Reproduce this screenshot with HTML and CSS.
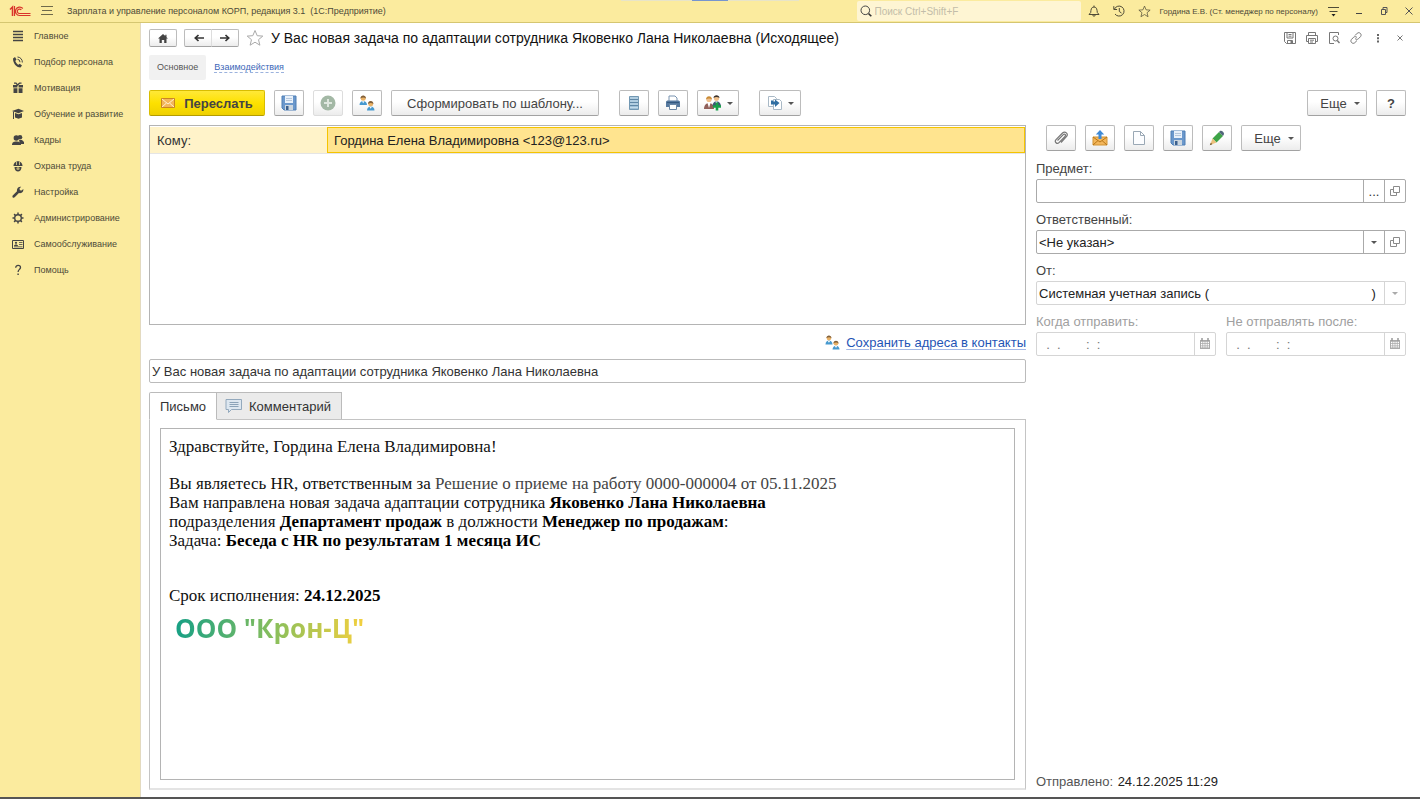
FILE: index.html
```html
<!DOCTYPE html>
<html lang="ru">
<head>
<meta charset="utf-8">
<title>Зарплата и управление персоналом КОРП, редакция 3.1</title>
<link rel="stylesheet" href="styles.css">
</head>
<body>
<svg class="defs" aria-hidden="true">
  <symbol id="floppy" viewBox="0 0 16 16"><path d="M1 1h14v14H3l-2-2z" fill="#6b98cc" stroke="#4f7fb5"/><path d="M4 1h8v7H4z" fill="#e9f1fa"/><path d="M5 3.500h6M5 5.500h6" stroke="#b5c7dc"/><path d="M4 10h8v5H4z" fill="#ccd6df"/><path d="M5 11h2.500v4H5z" fill="#3b608e"/></symbol>
  <symbol id="people" viewBox="0 0 16 16"><path d="M.5 10c0-5.500 7.500-5.500 7.500 0z" fill="#4699cf"/><path d="m3 6.300 1.200 2 1.200-2" fill="#fff"/><circle cx="4.200" cy="3.300" r="2.500" fill="#eab266"/><path d="M1.500 3.500C1.300-.5 7.100-.5 6.900 3.500 5.500 2 3 2 1.500 3.500" fill="#80603c"/><path d="M8 15.500c0-5.500 7.500-5.500 7.500 0z" fill="#4699cf"/><path d="m10.500 11.800 1.200 2 1.200-2" fill="#fff"/><circle cx="11.700" cy="8.800" r="2.500" fill="#eab266"/><path d="M9 9c-.2-4 5.600-4 5.400 0-1.400-1.500-3.900-1.500-5.400 0" fill="#80603c"/></symbol>
  <symbol id="open" viewBox="0 0 12 12"><path d="M4.500 1.500h6v6h-6zM4 4.500H1.500v6h6V8" fill="none" stroke="#8a8a8a"/></symbol>
  <symbol id="calendar" viewBox="0 0 12 12"><path d="M1 2h10v9H1z" fill="#aaa"/><path d="M3 0v3M9 0v3" stroke="#999" stroke-width="1.500"/><path d="M2 4.500h8M2 6.700h8M2 8.900h8" stroke="#fff" stroke-width="1.400" stroke-dasharray="1.400 .8"/></symbol>
  <symbol id="star" viewBox="0 0 18 18"><path d="m9 1.500 2.200 5.200 5.600.4-4.300 3.600 1.400 5.500L9 13.200l-4.900 3 1.400-5.500-4.300-3.600 5.600-.4z" fill="none" stroke="currentColor"/></symbol>
</svg>

<header class="topbar">
  <svg class="logo" viewBox="0 0 22 12"><path d="M1 4.500 3.500 2v9" fill="none" stroke="#d9352b" stroke-width="1.500"/><path d="M5.500 1v10M13.800 3.500A4.200 4.200 0 1 0 10.500 10.500H21.500M12.300 5A2.200 2.200 0 1 0 10.500 8.500H21.500" fill="none" stroke="#d9352b" stroke-width="1.200"/></svg>
  <button class="bare" aria-label="Меню"><svg width="12" height="10" viewBox="0 0 12 10"><path d="M0 .5h12M1 4.500h10M0 8.500h12" stroke="#6f6a4b"/></svg></button>
  <span class="app-title">Зарплата и управление персоналом КОРП, редакция 3.1&nbsp; (1С:Предприятие)</span>
  <label class="search">
    <svg width="12" height="12" viewBox="0 0 12 12"><circle cx="5.300" cy="5.300" r="4.300" fill="none" stroke="#444"/><path d="m8.500 8.500 2.800 2.800" stroke="#333" stroke-width="1.600"/></svg>
    <input type="text" placeholder="Поиск Ctrl+Shift+F" aria-label="Поиск">
  </label>
  <div class="top-tools">
    <button class="bare" aria-label="Уведомления"><svg width="12" height="12" viewBox="0 0 12 12"><path d="M1 9.500h10L9.300 7.500C9 5 9 2 6 2S3 5 2.700 7.500zM6 .5V2M4.700 9.800c.3 2 2.300 2 2.600 0" fill="none" stroke="#4f4b36"/></svg></button>
    <button class="bare" aria-label="История"><svg width="12" height="12" viewBox="0 0 12 12"><path d="M1.500 4A5 5 0 1 1 2 9M.8 1.200v3.300h3.300M6.300 3v3.500l2.200 1.500" fill="none" stroke="#4f4b36"/></svg></button>
    <button class="bare" aria-label="Избранное"><svg class="fav" width="13" height="13"><use href="#star"/></svg></button>
    <span class="user">Гордина Е.В. (Ст. менеджер по персоналу)</span>
    <button class="bare" aria-label="Настройки"><svg width="11" height="11" viewBox="0 0 11 11"><path d="M0 1.500h11M1.500 5.500h8" stroke="#4f4b36"/><path d="M3.500 8h4L5.500 10.500z" fill="#222"/></svg></button>
  </div>
  <div class="window-tools">
    <button class="bare" aria-label="Свернуть"><svg width="8" height="8" viewBox="0 0 8 8"><path d="M1 6.500h6" stroke="#444"/></svg></button>
    <button class="bare" aria-label="Развернуть"><svg width="8" height="8" viewBox="0 0 8 8"><path d="M1.500 2.500h4v5h-4zM3 2.500v-2h4v5H5.500" fill="none" stroke="#555"/></svg></button>
    <button class="bare" aria-label="Закрыть"><svg width="8" height="8" viewBox="0 0 8 8"><path d="m.5.5 7 7m0-7-7 7" stroke="#555"/></svg></button>
  </div>
</header>

<div class="body">
  <nav class="sidebar">
    <a href="#"><svg viewBox="0 0 12 12"><path d="M1 1.500h10M1 4.500h10M1 7.500h10M1 10.500h10" stroke="#444" stroke-width="1.300"/></svg>Главное</a>
    <a href="#"><svg viewBox="0 0 12 12"><path d="M1 2.500 3 1l1.500 2.500L3.300 5C4 7 5 8 6.500 8.800l1.200-1L10 9.500 8.500 11.500C4 11.500 1 7 1 2.500z" fill="#444"/><path d="M5.500 1a5 5 0 0 1 4.800 5.500M5.500 3.300A2.800 2.800 0 0 1 8 6.200" fill="none" stroke="#444"/></svg>Подбор персонала</a>
    <a href="#"><svg viewBox="0 0 12 12"><path d="M1 3h4.400v2.500H1zM6.600 3H11v2.500H6.600zM1.500 6.300h3.900V11H1.500zM6.600 6.300h3.900V11H6.600z" fill="#444"/><path d="M2 1.200h2L5.500 3 7.500 1.200h2" fill="none" stroke="#444" stroke-width="1.300"/></svg>Мотивация</a>
    <a href="#"><svg viewBox="0 0 12 12"><path d="M0 3 6.500.8 12 3 6.500 5.200zM3 5l3.500 1.200L10 5v4.500l-3.500 1.200L3 9.500z" fill="#444"/><path d="M1.500 3.500V11" stroke="#444"/></svg>Обучение и развитие</a>
    <a href="#"><svg viewBox="0 0 12 12"><circle cx="8" cy="3.200" r="2.300" fill="#444"/><path d="M7 6h3l2 2v2H8z" fill="#444"/><circle cx="4.300" cy="4" r="2.700" fill="#444"/><path d="M0 11c0-3 2-3.500 4.300-3.500S9 8 9 11z" fill="#444"/></svg>Кадры</a>
    <a href="#"><svg viewBox="0 0 12 12"><path d="M1.500 6c0-6.500 9-6.500 9 0zM2.500 7h7c0 6-7 6-7 0z" fill="#444"/><path d="M4.500 1.500V5M7.500 1.500V5M1 6.500h10" stroke="#f9eb9d" stroke-width=".7"/><circle cx="6" cy="8.500" r="1.600" fill="#b8ac70"/></svg>Охрана труда</a>
    <a href="#"><svg viewBox="0 0 12 12"><path d="M.7 9.500 5 5.300C4.500 2.500 6.500.3 9.200.8L7.500 2.500l.4 1.700 1.700.4 1.700-1.700c.5 2.700-1.700 4.700-4.400 4.200l-4.200 4.200C1.200 12.500-.2 11 .7 9.500z" fill="#444"/></svg>Настройка</a>
    <a href="#"><svg viewBox="0 0 12 12"><circle cx="6" cy="6" r="3.300" fill="none" stroke="#444" stroke-width="1.400"/><path d="M6 .5v2M6 9.500v2M.5 6h2M9.500 6h2M2.100 2.100l1.400 1.400M8.500 8.500l1.400 1.400M2.100 9.900l1.400-1.400M8.500 3.500l1.400-1.400" stroke="#444" stroke-width="1.500"/></svg>Администрирование</a>
    <a href="#"><svg viewBox="0 0 12 12"><path d="M.5 2.500h11v8H.5z" fill="none" stroke="#444"/><path d="M7 4.500h3.500M7 6.500h3.500M2 8.800h8.500" stroke="#444" stroke-width=".8"/><circle cx="4" cy="4.800" r="1.100" fill="#444"/><path d="M2 8c0-2 4-2 4 0z" fill="#444"/></svg>Самообслуживание</a>
    <a href="#"><svg viewBox="0 0 12 12"><path d="M3.700 3.800c0-3.300 4.800-3 4.800-.3C8.500 5.300 6.100 5.500 6.100 8" fill="none" stroke="#444" stroke-width="1.300"/><path d="M5.400 9.500h1.400V11H5.400z" fill="#444"/></svg>Помощь</a>
  </nav>

  <main class="page">
    <div class="title-row">
      <button class="btn small" aria-label="Домой"><svg width="10" height="9" viewBox="0 0 10 9"><path d="M5 0 0 4.600h1.500V9h2.300V6h2.400v3h2.300V4.600H10L8.500 3.200V.8H7.300v1.300z" fill="#444"/></svg></button>
      <div class="pair">
        <button class="btn small" aria-label="Назад"><svg width="10" height="8" viewBox="0 0 10 8"><path d="M10 4H2M4.500 1 1.300 4l3.200 3" fill="none" stroke="#333" stroke-width="1.700"/></svg></button>
        <button class="btn small" aria-label="Вперед"><svg width="10" height="8" viewBox="0 0 10 8"><path d="M0 4h8M5.500 1l3.200 3-3.200 3" fill="none" stroke="#333" stroke-width="1.700"/></svg></button>
      </div>
      <svg class="title-star" width="18" height="18"><use href="#star"/></svg>
      <h1>У Вас новая задача по адаптации сотрудника Яковенко Лана Николаевна (Исходящее)</h1>
      <div class="form-tools">
        <button class="bare" aria-label="Сохранить"><svg width="12" height="12" viewBox="0 0 12 12"><path d="M.5.5h11v11h-9l-2-2zM3 .5v5.500h6V.5M3.500 11.500V8.500h5v3M4.500 2.500h3M4.500 4.200h3" fill="none" stroke="#777"/><path d="M6.500 9h2v2.500h-2z" fill="#777"/></svg></button>
        <button class="bare" aria-label="Печать"><svg width="12" height="12" viewBox="0 0 12 12"><path d="M2.500 3.500v-3h7v3M2.500 9.500h-2v-6h11v6h-2M2.500 6.500h7v5h-7zM4 8.200h4M4 10h3" fill="none" stroke="#777"/></svg></button>
        <button class="bare" aria-label="Просмотр"><svg width="12" height="12" viewBox="0 0 12 12"><path d="M10.500 3V.5h-9v11H6" fill="none" stroke="#777"/><circle cx="7.500" cy="6.500" r="2.500" fill="none" stroke="#777"/><path d="m9.300 8.500 2.200 2.500" stroke="#777" stroke-width="1.400"/></svg></button>
        <button class="bare" aria-label="Ссылка"><svg width="12" height="12" viewBox="0 0 12 12"><path d="M5 3.500 7.300 1.200c2-1.700 5 1 3.300 3.300L8.500 6.700C7.500 7.700 6 7.500 5 6.500M7 8.500l-2.300 2.300c-2 1.700-5-1-3.300-3.300l2.100-2.200C4.500 4.300 6 4.500 7 5.500" fill="none" stroke="#777"/></svg></button>
        <button class="bare" aria-label="Еще"><svg width="12" height="12" viewBox="0 0 12 12"><path d="M5 2h2v2H5zM5 5.200h2v2H5zM5 8.400h2v2H5z" fill="#666"/></svg></button>
        <button class="bare" aria-label="Закрыть форму"><svg width="12" height="12" viewBox="0 0 12 12"><path d="m3.500 3.500 5 5m0-5-5 5" stroke="#777"/></svg></button>
      </div>
    </div>

    <div class="sections">
      <a class="current" href="#">Основное</a>
      <a class="dotted" href="#"><span>Взаимодействия</span></a>
    </div>

    <div class="toolbar">
      <button class="btn primary"><svg width="14" height="12" viewBox="0 0 14 12"><path d="M.5 1.500h13v9H.5z" fill="#f3b65b" stroke="#c98524"/><path d="m1 2 6 5 6-5M1 10l4.500-4M13 10 8.500 6" fill="none" stroke="#fff0cc"/></svg>Переслать</button>
      <button class="btn icon" aria-label="Записать"><svg width="16" height="16"><use href="#floppy"/></svg></button>
      <button class="btn icon faded" aria-label="Добавить"><svg width="16" height="16" viewBox="0 0 16 16"><circle cx="8" cy="8" r="7.500" fill="#a3b8a5"/><path d="M8 4v8M4 8h8" stroke="#dfe7df" stroke-width="2"/></svg></button>
      <button class="btn icon" aria-label="Контакты"><svg width="16" height="16"><use href="#people"/></svg></button>
      <button class="btn template">Сформировать по шаблону...</button>
      <button class="btn icon apart" aria-label="Список"><svg width="16" height="16" viewBox="0 0 16 16"><path d="M3.500 1.500h9v13h-9z" fill="#9fc0d8" stroke="#7298b3"/><path d="M4 4.500h8M4 7.500h8M4 10.500h8" stroke="#5f87a6"/><path d="M4 3h8M4 6h8M4 9h8M4 12.500h8" stroke="#c3dbea"/></svg></button>
      <button class="btn icon" aria-label="Печать письма"><svg width="16" height="16" viewBox="0 0 16 16"><path d="M4 7V1h6l2 2v4" fill="#fff" stroke="#7893b0"/><path d="M1 7c0-1 1-1.500 2-1.500h10c1 0 2 .5 2 1.500v5H1z" fill="#56799f"/><path d="M2 7.500h12" stroke="#34587f"/><path d="M4.500 9.500h7v5h-7z" fill="#fff" stroke="#6b87a5"/></svg></button>
      <button class="btn drop" aria-label="Участники"><svg width="18" height="16" viewBox="0 0 18 16"><circle cx="5" cy="4.500" r="2.600" fill="#f0c08c"/><path d="M2 4.500C2 0 8 0 8 4.500 6 3 4 3 2 4.500" fill="#c98b35"/><path d="M0 14c0-8 10-8 10 0z" fill="#91605a"/><path d="m3.500 8 1.500 5 1.500-5" fill="#fff"/><circle cx="12.500" cy="3.300" r="2.600" fill="#f0c08c"/><path d="M9.500 3C9.500-.8 15.500-.8 15.500 3c-2-1.200-4-1.200-6 0" fill="#3b3430"/><path d="M8.500 11c0-6.500 8-6.500 8.500 0z" fill="#3e5877"/><path d="m11.500 6.500 1 4 1-4" fill="#fff"/><path d="M13 7.500v8M9 11.500h8" stroke="#19a04a" stroke-width="2.600"/></svg><i class="caret"></i></button>
      <button class="btn drop apart" aria-label="Перенести"><svg width="16" height="16" viewBox="0 0 16 16"><path d="M1.500 1.500h6l2 2v8h-8z" fill="#fff" stroke="#a9b9c6"/><path d="M6.500 4.500h6l2 2v8h-8z" fill="#fff" stroke="#a9b9c6"/><path d="M4 5.500v4h4V12l4.500-4L8 4.500v2H6v-1z" fill="#316fa2"/></svg><i class="caret"></i></button>
      <span class="grow"></span>
      <button class="btn more">Еще<i class="caret"></i></button>
      <button class="btn icon help">?</button>
    </div>

    <div class="columns">
      <section class="letter">
        <div class="recipients">
          <table><tbody><tr><th scope="row">Кому:</th><td>Гордина Елена Владимировна &lt;123@123.ru&gt;</td></tr></tbody></table>
        </div>
        <div class="save-row"><svg width="15" height="15"><use href="#people"/></svg><a href="#">Сохранить адреса в контакты</a></div>
        <input class="subject" type="text" aria-label="Тема" value="У Вас новая задача по адаптации сотрудника Яковенко Лана Николаевна">
        <div class="tabs" role="tablist">
          <button class="tab active" role="tab" aria-selected="true">Письмо</button>
          <button class="tab" role="tab" aria-selected="false"><svg width="18" height="16" viewBox="0 0 18 16"><path d="M1 1.500h15.500v10H6.500L3.500 14.500v-3H1z" fill="#dde7f0" stroke="#93a9bd"/><path d="M4.500 4.500h9M4.500 6.500h9M4.500 8.500h9" stroke="#8ba3b8"/></svg>Комментарий</button>
        </div>
        <div class="panel">
          <article class="message">
            <p>Здравствуйте, Гордина Елена Владимировна!</p>
            <p>Вы являетесь HR, ответственным за <span class="soft">Решение о приеме на работу 0000-000004 от 05.11.2025</span><br>
            Вам направлена новая задача адаптации сотрудника <b>Яковенко Лана Николаевна</b><br>
            подразделения <b>Департамент продаж</b> в должности <b>Менеджер по продажам</b>:<br>
            Задача: <b>Беседа с HR по результатам 1 месяца ИС</b></p>
            <p class="due">Срок исполнения: <b>24.12.2025</b></p>
            <div class="company">ООО "Крон-Ц"</div>
          </article>
        </div>
      </section>

      <aside class="details">
        <div class="toolbar side">
          <button class="btn icon" aria-label="Прикрепить"><svg width="16" height="16" viewBox="0 0 16 16"><path d="m4.500 10.500 5.800-5.800c1.300-1.300 3 .3 1.700 1.700l-6 6.200c-2 2-5-.7-3-3L9.500 3c2.700-2.500 6.300 1 3.900 3.700L8 12.500" fill="none" stroke="#777" stroke-width="1.200"/></svg></button>
          <button class="btn icon" aria-label="Отправить"><svg width="16" height="16" viewBox="0 0 16 16"><path d="M1 7h14v8H1z" fill="#f3b65b" stroke="#d19332"/><path d="m1 7 7 5 7-5M1 15l5-4.500M15 15l-5-4.500" fill="none" stroke="#b87618"/><path d="M8 0 3.800 4.500h2.700V9h3V4.500h2.700z" fill="#3f8ad6"/></svg></button>
          <button class="btn icon" aria-label="Новый"><svg width="16" height="16" viewBox="0 0 16 16"><path d="M2.500 1.500h7l4 4v9h-11zM9.500 1.500v4h4" fill="#fcfdff" stroke="#9aa8b5"/></svg></button>
          <button class="btn icon" aria-label="Сохранить вложение"><svg width="16" height="16"><use href="#floppy"/></svg></button>
          <button class="btn icon" aria-label="Изменить"><svg width="16" height="16" viewBox="0 0 16 16"><path d="m3.500 8.500 6.500-6.500 4 4-6.500 6.500z" fill="#3ea447"/><path d="m10 2 1-1c1.500-1.500 5 2 3.800 3.500L14 6z" fill="#52677b"/><path d="M3.500 8.500 1 15l6.500-2.500z" fill="#ecc07b"/><path d="m1.800 12.800-1 2.400 2.500-1z" fill="#6b5530"/></svg></button>
          <button class="btn more">Еще<i class="caret"></i></button>
        </div>
        <label for="subj">Предмет:</label>
        <div class="field"><input id="subj" type="text"><button aria-label="Выбрать">...</button><button aria-label="Открыть предмет"><svg width="12" height="12"><use href="#open"/></svg></button></div>
        <label for="resp">Ответственный:</label>
        <div class="field"><input id="resp" type="text" value="&lt;Не указан&gt;"><button aria-label="Список ответственных"><i class="caret"></i></button><button aria-label="Открыть ответственного"><svg width="12" height="12"><use href="#open"/></svg></button></div>
        <label for="from">От:</label>
        <div class="field pale"><input id="from" type="text" readonly value="Системная учетная запись (&nbsp;&nbsp;&nbsp;&nbsp;&nbsp;&nbsp;&nbsp;&nbsp;&nbsp;&nbsp;&nbsp;&nbsp;&nbsp;&nbsp;&nbsp;&nbsp;&nbsp;&nbsp;&nbsp;&nbsp;&nbsp;&nbsp;&nbsp;&nbsp;&nbsp;&nbsp;&nbsp;&nbsp;&nbsp;&nbsp;&nbsp;&nbsp;&nbsp;&nbsp;&nbsp;&nbsp;&nbsp;&nbsp;&nbsp;&nbsp;&nbsp;&nbsp;&nbsp;&nbsp;&nbsp;)"><button aria-label="Список учетных записей"><i class="caret light"></i></button></div>
        <div class="dates">
          <div><label for="when">Когда отправить:</label>
          <div class="field pale"><input id="when" type="text" value="&nbsp; .&nbsp; .&nbsp; &nbsp; &nbsp; &nbsp;:&nbsp; :"><button aria-label="Календарь отправки"><svg width="12" height="12"><use href="#calendar"/></svg></button></div></div>
          <div><label for="until">Не отправлять после:</label>
          <div class="field pale"><input id="until" type="text" value="&nbsp; .&nbsp; .&nbsp; &nbsp; &nbsp; &nbsp;:&nbsp; :"><button aria-label="Календарь срока"><svg width="12" height="12"><use href="#calendar"/></svg></button></div></div>
        </div>
        <p class="sent"><span>Отправлено:</span> 24.12.2025 11:29</p>
      </aside>
    </div>
  </main>
</div>
</body>
</html>
```
FILE: styles.css
```css
* { box-sizing: border-box; }
body {
  margin: 0;
  min-height: 100vh;
  display: flex;
  flex-direction: column;
  font-family: "Liberation Sans", Arial, sans-serif;
  font-size: 13px;
  color: #333;
  background: #fff;
  border-bottom: 2px solid #555;
}
button, input { font: inherit; color: inherit; }
button { padding: 0; }
svg { flex: none; }
.defs { position: absolute; width: 0; height: 0; }
.bare { display: flex; border: 0; background: none; }

.topbar {
  position: relative;
  display: flex;
  align-items: center;
  height: 23px;
  padding: 0 7px 0 9px;
  background: #fbeb9e;
  border-bottom: 1px solid #d5c671;
  font-size: 10px;
  color: #4d4a38;
}
.topbar::before {
  content: "";
  position: absolute;
  top: 0;
  left: 50%;
  width: 178px;
  height: 1px;
  margin-left: -89px;
  background: linear-gradient(90deg, #e8e4c8 71px, #7795cf 71px 107px, #e8e4c8 107px);
}
.logo { width: 22px; height: 12px; margin-right: 10px; }
.app-title { margin-left: 14px; flex: 1; font-size: 9px; }
.search {
  display: flex;
  align-items: center;
  gap: 3px;
  width: 224px;
  height: 20px;
  padding-left: 3px;
  margin-right: 7px;
  background: #fef5d3;
  border-radius: 2px;
}
.search input { flex: 1; min-width: 0; border: 0; padding: 0; background: none; }
.search input::placeholder { color: #c3bda9; }
.top-tools { display: flex; align-items: center; gap: 13px; }
.user { font-size: 8px; margin: 0 -3px 0 -4px; }
.fav { color: #4f4b36; }
.window-tools { display: flex; gap: 17px; margin-left: 16px; }

.body { flex: 1; display: flex; }
.sidebar {
  width: 141px;
  background: #fbeb9e;
  border-right: 1px solid #e3dac0;
}
.sidebar a {
  display: flex;
  align-items: center;
  gap: 10px;
  height: 26px;
  padding-left: 12px;
  font-size: 9px;
  color: #4d4a38;
  text-decoration: none;
  white-space: nowrap;
}
.sidebar svg { width: 12px; height: 12px; }

.page { flex: 1; min-width: 0; display: flex; flex-direction: column; padding: 6px 14px 7px 8px; }
.title-row { display: flex; align-items: center; height: 18px; }
.btn {
  display: flex;
  align-items: center;
  justify-content: center;
  height: 26px;
  border: 1px solid #bcbcbc;
  border-bottom-color: #a2a2a2;
  border-radius: 2px;
  background: linear-gradient(#fff, #fff 45%, #ececec);
  color: #444;
}
.btn.small { width: 28px; height: 18px; }
.pair { display: flex; margin: 0 7px; }
.pair .btn + .btn { border-left-color: #ddd; border-radius: 0 2px 2px 0; margin-left: -1px; }
.pair .btn:first-child { border-right: 0; border-radius: 2px 0 0 2px; }
.title-star { color: #aaa; margin-right: 7px; }
h1 { margin: 0; flex: 1; font-size: 14px; font-weight: 400; color: #111; }
.form-tools { display: flex; gap: 10px; }

.sections { display: flex; margin-top: 8px; font-size: 9px; }
.sections a { height: 25px; line-height: 25px; padding: 0 8px; text-decoration: none; }
.current { background: #f1f1f1; border-radius: 2px; color: #555; }
.dotted { color: #3b66b8; }
.dotted span { border-bottom: 1px dashed #9bb2dd; }

.toolbar { display: flex; gap: 9px; margin-top: 10px; }
.btn.primary {
  width: 116px;
  gap: 9px;
  background: linear-gradient(#ffe838, #fde100 50%, #efd000);
  border-color: #d8bd00;
  border-bottom-color: #b39c00;
  font-weight: 700;
}
.btn.icon { width: 30px; }
.btn.faded { border-color: #ddd; }
.btn.template { width: 208px; }
.btn.apart { margin-left: 11px; }
.btn.drop { width: 42px; gap: 5px; }
.btn.more { width: 60px; gap: 7px; padding-left: 6px; }
.btn.help { font-weight: 700; }
.grow { flex: 1; }
.caret { width: 0; height: 0; border: 3px solid transparent; border-top-color: #555; border-bottom: 0; }
.caret.light { border-top-color: #aaa; }

.columns { flex: 1; display: grid; grid-template-columns: minmax(0, 877fr) minmax(0, 370fr); gap: 10px; margin-top: 9px; }
.letter { display: flex; flex-direction: column; }
.recipients { height: 200px; padding-top: 1px; border: 1px solid #b4b4b4; }
.recipients table { width: 100%; border-spacing: 0; table-layout: fixed; border-bottom: 1px solid #e5e5e5; }
.recipients th, .recipients td { height: 26px; padding: 0 7px; }
.recipients th { width: 177px; text-align: left; font-weight: 400; background: #fff3c9; }
.recipients td { background: #ffe48f; box-shadow: inset 0 0 0 1px #f5c400; color: #222; }
.save-row { display: flex; align-items: center; justify-content: flex-end; gap: 6px; height: 34px; }
.save-row a { color: #1f55b5; text-decoration-color: #a3b8e6; text-underline-offset: 2px; }
.subject { height: 24px; padding: 0 2px; border: 1px solid #bbb; border-radius: 2px; }
.tabs { display: flex; height: 28px; margin-top: 9px; margin-bottom: -1px; }
.tab { display: flex; align-items: center; gap: 6px; padding: 0 10px 0 8px; border: 1px solid #bbb; border-left: 0; background: #ebebeb; }
.tab.active { z-index: 1; padding: 0 10px; border-left: 1px solid #bbb; border-bottom-color: #fff; border-radius: 2px 0 0; background: #fff; }
.panel { flex: 1; display: flex; padding: 8px 10px; border: 1px solid #c4c4c4; border-bottom: 2px solid #e4e4e4; }
.message {
  flex: 1;
  padding: 8px;
  border: 1px solid #b4b4b4;
  font-family: "Liberation Serif", "Times New Roman", serif;
  font-size: 17px;
  line-height: 19px;
  color: #111;
}
.message p { margin: 0 0 18px; }
.message b { color: #000; }
.message .soft { color: #444; }
.message .due { margin: 36px 0 7px; }
.company {
  width: max-content;
  margin-left: 6px;
  font: 700 26px/32px "Open Sans", "Noto Sans", sans-serif;
  background: linear-gradient(90deg, #16a085, #8fc05a 55%, #f4d03f);
  background-clip: text;
  -webkit-background-clip: text;
  color: transparent;
}

.details { display: flex; flex-direction: column; }
.toolbar.side { margin: 0 0 1px 10px; }
.details label { height: 27px; line-height: 33px; color: #444; }
.field { display: flex; height: 24px; border: 1px solid #aaa; border-radius: 2px; }
.field input { flex: 1; min-width: 0; border: 0; padding: 0 2px; background: none; color: #222; }
.field button { display: flex; align-items: center; justify-content: center; width: 21px; border: 0; border-left: 1px solid #aaa; background: none; }
.pale, .pale button { border-color: #d5d5d5; }
.dates { display: grid; grid-template-columns: repeat(2, minmax(0, 1fr)); gap: 10px; }
.details .dates label { display: block; color: #a0a0a0; }
.dates input { color: #777; }
.sent { margin: auto 0 0; line-height: 16px; color: #222; }
.sent span { color: #555; margin-right: 1px; }
```
